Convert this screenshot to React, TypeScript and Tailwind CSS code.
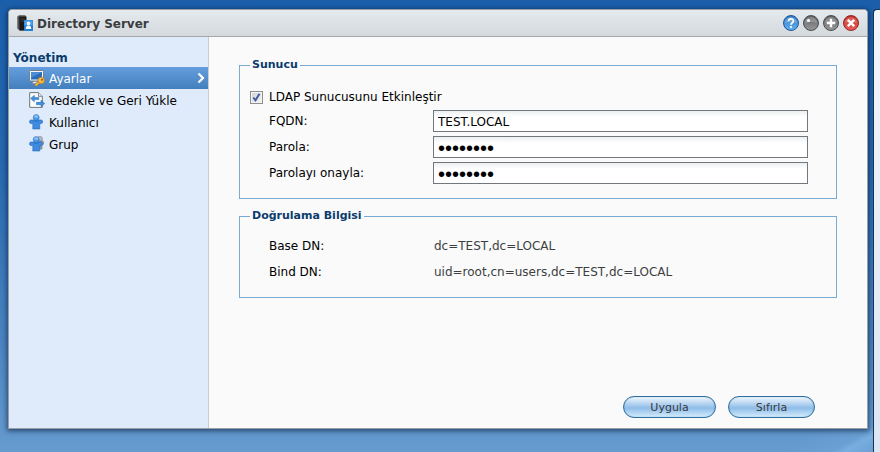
import { useState } from 'react'
import type { FormEvent, ReactNode } from 'react'

function ServerIcon() {
  return (
    <svg viewBox="0 0 16 16" className="h-4 w-4 shrink-0">
      <path d="M0.300 1.500 L2 0.200 H8 L9.300 1.200 V15.500 H2.500 L0.300 13.500 Z" fill="#555" />
      <path d="M2.200 1.800 H9.300 V15.500 H2.500 Z" fill="#1a1a1a" />
      <path d="M3.500 4 H8 M3.500 6 H8" stroke="#4c4c4c" strokeWidth="0.800" />
      <rect x="7" y="5" width="9" height="11" rx="0.600" fill="#2280d4" />
      <rect x="7.500" y="5.500" width="8" height="5" fill="#4aa2ea" />
      <circle cx="11.500" cy="8.400" r="1.800" fill="#fff" />
      <path d="M8.700 14 C8.700 11.500 10 10.500 11.500 10.500 C13 10.500 14.300 11.500 14.300 14 Z" fill="#fff" />
    </svg>
  )
}

function SettingsIcon() {
  return (
    <svg viewBox="0 0 16 16" className="h-4 w-4 shrink-0">
      <rect x="0.500" y="0.500" width="14" height="10.500" rx="1" fill="#f4f6f8" stroke="#6c7680" strokeWidth="0.900" />
      <rect x="2" y="2" width="11" height="7.500" fill="#2a6cb8" />
      <path d="M2 2 H13 L2 8 Z" fill="#4a8dd4" />
      <path d="M5 11.500 H8 V13.500 H3.500 V12.500 Z" fill="#e8ecef" stroke="#77808a" strokeWidth="0.500" />
      <path d="M10.200 12 L7 15" stroke="#b8741a" strokeWidth="2.600" strokeLinecap="round" />
      <path d="M10.200 12 L7 15" stroke="#f8c455" strokeWidth="1.500" strokeLinecap="round" />
      <circle cx="12.200" cy="10.500" r="3.200" fill="#f8bd48" stroke="#c17d20" strokeWidth="0.800" />
      <circle cx="13" cy="9.700" r="1" fill="#8a5a1c" />
    </svg>
  )
}

function BackupIcon() {
  return (
    <svg viewBox="0 0 16 16" className="h-4 w-4 shrink-0">
      <path d="M0.700 0.600 H9.500 L13.300 4.400 V15.400 H0.700 Z" fill="#fbfcfd" stroke="#6f767d" />
      <path d="M9.500 0.600 V4.400 H13.300" fill="#e0e4e8" stroke="#6f767d" strokeWidth="0.800" />
      <path d="M1.700 6.500 L5.300 3.300 V5.400 H9.800 V7.600 H5.300 V9.700 Z" fill="#3f8fe0" stroke="#2466ad" strokeWidth="0.500" />
      <path d="M15.700 11.500 L12 8.200 V10.300 H7.500 V12.700 H12 V14.800 Z" fill="#3f8fe0" stroke="#2466ad" strokeWidth="0.500" />
    </svg>
  )
}

function Figure() {
  return (
    <>
      <path d="M1.500 6 H12.500 C14 6 14 9.500 12.500 9.500 H10.800 V15 H3.800 V9.500 H1.500 C0.300 9.500 0.300 6 1.500 6 Z" fill="#3d8be0" stroke="#2a6ab8" strokeWidth="0.600" />
      <circle cx="7.200" cy="3.600" r="3" fill="#4896e6" stroke="#2a6ab8" strokeWidth="0.500" />
      <ellipse cx="7.200" cy="2.600" rx="2" ry="1.300" fill="#8cc2f6" />
      <path d="M4.400 6.400 C5.200 8 9.200 8 10 6.400" fill="none" stroke="#2d70bf" strokeWidth="0.700" />
    </>
  )
}

function UserIcon() {
  return (
    <svg viewBox="0 0 16 16" className="h-4 w-4 shrink-0">
      <Figure />
    </svg>
  )
}

function GroupIcon() {
  return (
    <svg viewBox="0 0 16 16" className="h-4 w-4 shrink-0">
      <circle cx="10.800" cy="3" r="2.600" fill="#b4bac1" stroke="#737b84" strokeWidth="0.600" />
      <path d="M8 5 H13.500 C15 5 15 8.500 13.500 9 H13 V13 H8 Z" fill="#949ca5" stroke="#737b84" strokeWidth="0.600" />
      <Figure />
    </svg>
  )
}

function ChevronIcon() {
  return (
    <svg viewBox="0 0 8 12" className="ml-auto h-3 w-2 shrink-0">
      <path d="M1.500 1.500 L6 6 L1.500 10.500" fill="none" stroke="#fff" strokeWidth="2.200" />
    </svg>
  )
}

interface WindowButtonProps {
  label: string
  tone: string
  children: ReactNode
}

function WindowButton({ label, tone, children }: WindowButtonProps) {
  return (
    <button type="button" aria-label={label} className={`h-4 w-4 rounded-full border ${tone}`}>
      <svg viewBox="0 0 14 14" className="h-full w-full">
        <path d="M1 7 A6 6 0 0 1 13 7 Q7 5 1 7 Z" fill="#fff" opacity="0.22" />
        {children}
      </svg>
    </button>
  )
}

const menu = [
  { id: 'settings', label: 'Ayarlar', Icon: SettingsIcon },
  { id: 'backup', label: 'Yedekle ve Geri Yükle', Icon: BackupIcon },
  { id: 'user', label: 'Kullanıcı', Icon: UserIcon },
  { id: 'group', label: 'Grup', Icon: GroupIcon },
]

const inputClass =
  'h-[22px] min-w-0 flex-1 border border-[#71777d] bg-linear-to-b from-[#eceff1] to-white to-30% px-1 pt-0.5 text-black outline-none'
const passwordClass = `${inputClass} font-['Liberation_Sans',sans-serif] text-xl leading-5`
const legendClass = 'px-0.5 text-[11px] leading-4 font-bold text-[#0b3c6d]'
const buttonClass =
  'h-[22px] rounded-full border border-[#2f6f9f] bg-linear-to-b from-[#f0f6fc] via-[#8fbde8] via-55% to-[#d3ecfc] pt-0.5 text-[11px] text-[#36393d] shadow-[inset_0_0_1px_#5b96c4]'

export default function App() {
  const [active, setActive] = useState('settings')
  const [enabled, setEnabled] = useState(true)
  const [fqdn, setFqdn] = useState('TEST.LOCAL')
  const [password, setPassword] = useState('password')
  const [confirm, setConfirm] = useState('password')

  const reset = () => {
    setEnabled(true)
    setFqdn('TEST.LOCAL')
    setPassword('password')
    setConfirm('password')
  }

  const apply = (e: FormEvent) => {
    e.preventDefault()
  }

  return (
    <div className="flex min-h-screen bg-[linear-gradient(330deg,rgba(140,195,240,0)_0px,rgba(140,195,240,0.5)_18px,rgba(140,195,240,0.15)_24px,rgba(140,195,240,0)_50px),linear-gradient(to_bottom,#1b5fab,#2667ae_35%,#4a83bf_75%,#669bcf)] pt-[9px] pl-2 font-['Verdana','DejaVu_Sans',sans-serif] text-xs text-black">
      <div className="mb-[23px] flex min-w-0 flex-1 flex-col rounded-t border border-[#98a0a5] bg-[#fafafa] shadow-[0_1px_5px_1px_rgba(0,20,50,0.6)]">
        <header className="flex h-[27px] shrink-0 items-center gap-1 rounded-t border-b border-[#a5a8ab] bg-linear-to-b from-[#e5eaee] to-[#d4d9dd] px-2">
          <ServerIcon />
          <h1 className="pt-0.5 font-bold text-[#3a3d40]">Directory Server</h1>
          <div className="ml-auto flex gap-1">
            <WindowButton label="Yardım" tone="border-[#1c5795] bg-linear-to-b from-[#2f78c4] to-[#63b0f2]">
              <path d="M4.600 5.200 C4.600 2.200 9.400 2.200 9.400 5 C9.400 6.800 7 6.800 7 8.800" fill="none" stroke="#fff" strokeWidth="1.700" />
              <circle cx="7" cy="11" r="1.100" fill="#fff" />
            </WindowButton>
            <WindowButton label="Küçült" tone="border-[#4a4c4e] bg-linear-to-b from-[#5e6062] to-[#96989a]">
              <circle cx="4.500" cy="4.500" r="1.600" fill="#fff" />
            </WindowButton>
            <WindowButton label="Büyüt" tone="border-[#4a4c4e] bg-linear-to-b from-[#5e6062] to-[#96989a]">
              <path d="M7 2.800 V11.200 M2.800 7 H11.200" stroke="#fff" strokeWidth="2.400" />
            </WindowButton>
            <WindowButton label="Kapat" tone="border-[#98221f] bg-linear-to-b from-[#c22a25] to-[#e8605a]">
              <path d="M3.800 3.800 L10.200 10.200 M10.200 3.800 L3.800 10.200" stroke="#fff" strokeWidth="2.400" />
            </WindowButton>
          </div>
        </header>

        <div className="flex flex-1">
          <nav className="w-[200px] shrink-0 border-r border-[#c9cccf] bg-[#dfebfa] pt-3">
            <h2 className="px-1 leading-[18px] font-bold text-[#0b3c6d]">Yönetim</h2>
            <ul>
              {menu.map(({ id, label, Icon }) => (
                <li key={id}>
                  <button
                    type="button"
                    onClick={() => setActive(id)}
                    className={`flex h-[22px] w-full items-center gap-1 pr-[3px] pl-5 text-left ${
                      active === id ? 'bg-linear-to-b from-[#659ede] to-[#437fbd] text-white' : ''
                    }`}
                  >
                    <Icon />
                    <span className="pt-0.5">{label}</span>
                    {active === id && <ChevronIcon />}
                  </button>
                </li>
              ))}
            </ul>
          </nav>

          <form onSubmit={apply} className="flex min-w-0 flex-1 flex-col px-[30px] pt-5 pb-2.5">
            <fieldset className="border border-[#78abd2] px-2.5 pb-3.5">
              <legend className={legendClass}>Sunucu</legend>
              <div className="pt-[11px] pr-[18px]">
                <label className="flex h-[26px] items-center gap-1.5">
                  <input
                    type="checkbox"
                    checked={enabled}
                    onChange={(e) => setEnabled(e.target.checked)}
                    className="peer sr-only"
                  />
                  <span className="grid h-[13px] w-[13px] place-items-center border border-[#8e8f8f] bg-linear-to-br from-[#cdd3da] to-[#f6f6f6] shadow-[inset_0_0_0_1px_#f4f4f4] peer-checked:[&>svg]:visible">
                    <svg viewBox="0 0 9 9" className="invisible h-[9px] w-[9px]">
                      <path d="M1.300 4.500 L3.500 7.300 L7.500 0.800" fill="none" stroke="#4258a0" strokeWidth="1.900" />
                    </svg>
                  </span>
                  LDAP Sunucusunu Etkinleştir
                </label>
                <div className="flex flex-col gap-1 pl-[19px]">
                  <div className="flex">
                    <label htmlFor="fqdn" className="w-[164px] shrink-0 leading-[22px]">FQDN:</label>
                    <input id="fqdn" type="text" value={fqdn} onChange={(e) => setFqdn(e.target.value)} className={inputClass} />
                  </div>
                  <div className="flex">
                    <label htmlFor="password" className="w-[164px] shrink-0 leading-[22px]">Parola:</label>
                    <input id="password" type="password" value={password} onChange={(e) => setPassword(e.target.value)} className={passwordClass} />
                  </div>
                  <div className="flex">
                    <label htmlFor="confirm" className="w-[164px] shrink-0 leading-[22px]">Parolayı onayla:</label>
                    <input id="confirm" type="password" value={confirm} onChange={(e) => setConfirm(e.target.value)} className={passwordClass} />
                  </div>
                </div>
              </div>
            </fieldset>

            <fieldset className="mt-[9px] border border-[#78abd2] px-2.5 pb-3">
              <legend className={legendClass}>Doğrulama Bilgisi</legend>
              <dl className="grid grid-cols-[165px_1fr] pt-[9px] pl-[19px] leading-[26px]">
                <dt>Base DN:</dt>
                <dd className="text-[#3c3f42]">dc=TEST,dc=LOCAL</dd>
                <dt>Bind DN:</dt>
                <dd className="text-[#3c3f42]">uid=root,cn=users,dc=TEST,dc=LOCAL</dd>
              </dl>
            </fieldset>

            <div className="mt-auto flex justify-end gap-3 pr-[22px]">
              <button type="submit" className={`w-[93px] ${buttonClass}`}>Uygula</button>
              <button type="button" onClick={reset} className={`w-[87px] ${buttonClass}`}>Sıfırla</button>
            </div>
          </form>
        </div>
      </div>

      {/* edge of the neighbouring window */}
      <aside className="ml-[5px] w-[7px] shrink-0 rounded-tl-sm border-t border-l border-[#17324f] bg-linear-to-b from-[#f3f6fb] to-[#dce6f2]" />
    </div>
  )
}
